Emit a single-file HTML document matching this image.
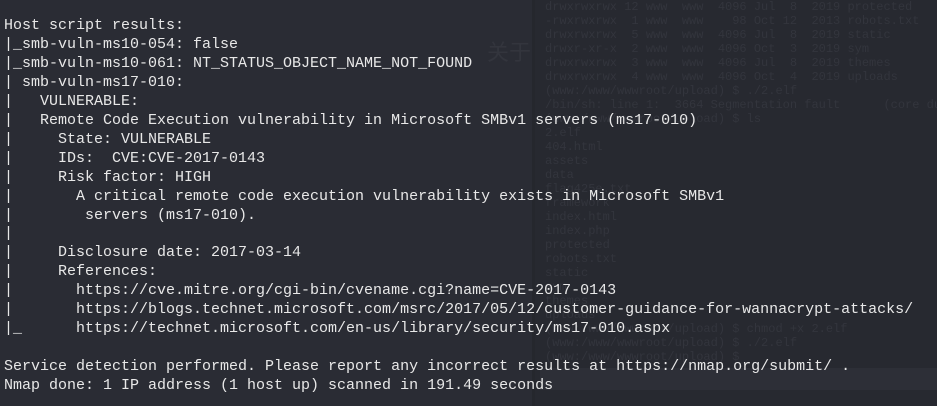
<!DOCTYPE html>
<html><head><meta charset="utf-8"><style>
html,body{margin:0;padding:0;width:937px;height:406px;overflow:hidden;background:#2a2c34;position:relative;}
.bg{position:absolute;left:532px;top:0;width:405px;height:406px;background:#272930;border-left:3px solid #25272d;overflow:hidden;}
.strip{position:absolute;left:540px;top:368px;width:397px;height:22px;background:#2d2f37;}
.ghost{position:absolute;left:10px;top:0px;margin:0;font:12px/14px "Liberation Mono",monospace;color:#33353d;white-space:pre;}
.cj{position:absolute;font:22px "Noto Sans CJK SC",sans-serif;color:#33353d;}
pre.main{position:absolute;left:4px;top:17px;margin:0;font:15px/18.95px "Liberation Mono",monospace;color:#e8e8e8;white-space:pre;}
</style></head><body>
<div class="bg"><pre class="ghost">drwxrwxrwx 12 www  www  4096 Jul  8  2019 protected
-rwxrwxrwx  1 www  www    98 Oct 12  2013 robots.txt
drwxrwxrwx  5 www  www  4096 Jul  8  2019 static
drwxr-xr-x  2 www  www  4096 Oct  3  2019 sym
drwxrwxrwx  3 www  www  4096 Jul  8  2019 themes
drwxrwxrwx  4 www  www  4096 Oct  4  2019 uploads
(www:/www/wwwroot/upload) $ ./2.elf
/bin/sh: line 1:  3664 Segmentation fault      (core du
(www:/www/wwwroot/upload) $ ls
2.elf
404.html
assets
data
flag425e.txt
framework
index.html
index.php
protected
robots.txt
static
sym
themes
uploads
(www:/www/wwwroot/upload) $ chmod +x 2.elf
(www:/www/wwwroot/upload) $ ./2.elf
(www:/www/wwwroot/upload) $</pre></div>
<div class="strip"></div>
<div class="cj" style="left:487px;top:35px;">关于</div>
<pre class="main">Host script results:
|_smb-vuln-ms10-054: false
|_smb-vuln-ms10-061: NT_STATUS_OBJECT_NAME_NOT_FOUND
| smb-vuln-ms17-010:
|   VULNERABLE:
|   Remote Code Execution vulnerability in Microsoft SMBv1 servers (ms17-010)
|     State: VULNERABLE
|     IDs:  CVE:CVE-2017-0143
|     Risk factor: HIGH
|       A critical remote code execution vulnerability exists in Microsoft SMBv1
|        servers (ms17-010).
|
|     Disclosure date: 2017-03-14
|     References:
|       https://cve.mitre.org/cgi-bin/cvename.cgi?name=CVE-2017-0143
|       https://blogs.technet.microsoft.com/msrc/2017/05/12/customer-guidance-for-wannacrypt-attacks/
|_      https://technet.microsoft.com/en-us/library/security/ms17-010.aspx

Service detection performed. Please report any incorrect results at https://nmap.org/submit/ .
Nmap done: 1 IP address (1 host up) scanned in 191.49 seconds</pre>
</body></html>
